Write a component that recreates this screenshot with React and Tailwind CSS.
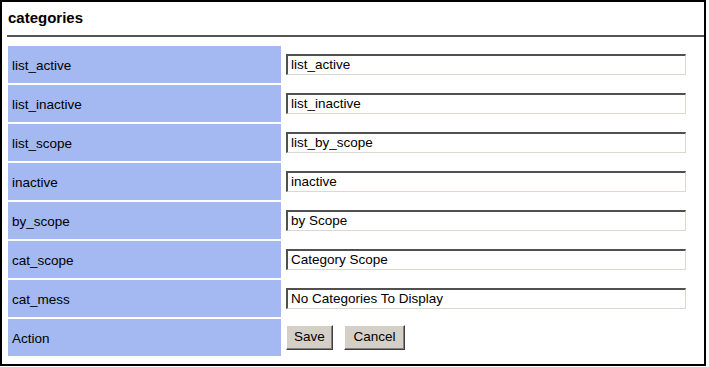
const rows = [
  { label: "list_active", value: "list_active" },
  { label: "list_inactive", value: "list_inactive" },
  { label: "list_scope", value: "list_by_scope" },
  { label: "inactive", value: "inactive" },
  { label: "by_scope", value: "by Scope" },
  { label: "cat_scope", value: "Category Scope" },
  { label: "cat_mess", value: "No Categories To Display" },
];

const Button = ({ children, width }) => (
  <button
    className={`h-[25px] ${width} bg-[#d4d0c8] text-[13.5px] text-black border border-t-white border-l-white border-r-[#404040] border-b-[#404040] shadow-[inset_-1px_-1px_0_#808080]`}
  >
    {children}
  </button>
);

export default function App() {
  return (
    <div
      className="w-[706px] h-[366px] bg-white border-2 border-black text-black"
      style={{ fontFamily: '"Liberation Sans", Arial, sans-serif' }}
    >
      <div className="h-[33px] pl-[6px] flex items-center font-bold text-[15px]">
        categories
      </div>
      <div className="ml-[5px] h-[2px] bg-[#555]" />
      <div className="mt-[9px] pl-[6px] flex flex-col gap-[2px]">
        {rows.map((row) => (
          <div key={row.label} className="flex h-[37px]">
            <div className="w-[273px] bg-[#a4b8f1] flex items-center pl-[4px] pt-[3px] text-[13.5px]">
              {row.label}
            </div>
            <div className="pl-[5px] flex items-center">
              <div className="w-[400px] h-[21px] bg-white border-t-2 border-l-2 border-t-[#505050] border-l-[#505050] border-b border-r border-b-[#dcd8d0] border-r-[#dcd8d0] flex items-center pl-[3px] text-[13.5px]">
                {row.value}
              </div>
            </div>
          </div>
        ))}
        <div className="flex h-[37px]">
          <div className="w-[273px] bg-[#a4b8f1] flex items-center pl-[4px] pt-[3px] text-[13.5px]">
            Action
          </div>
          <div className="pl-[5px] flex items-center gap-[11px]">
            <Button width="w-[47px]">Save</Button>
            <Button width="w-[61px]">Cancel</Button>
          </div>
        </div>
      </div>
    </div>
  );
}
